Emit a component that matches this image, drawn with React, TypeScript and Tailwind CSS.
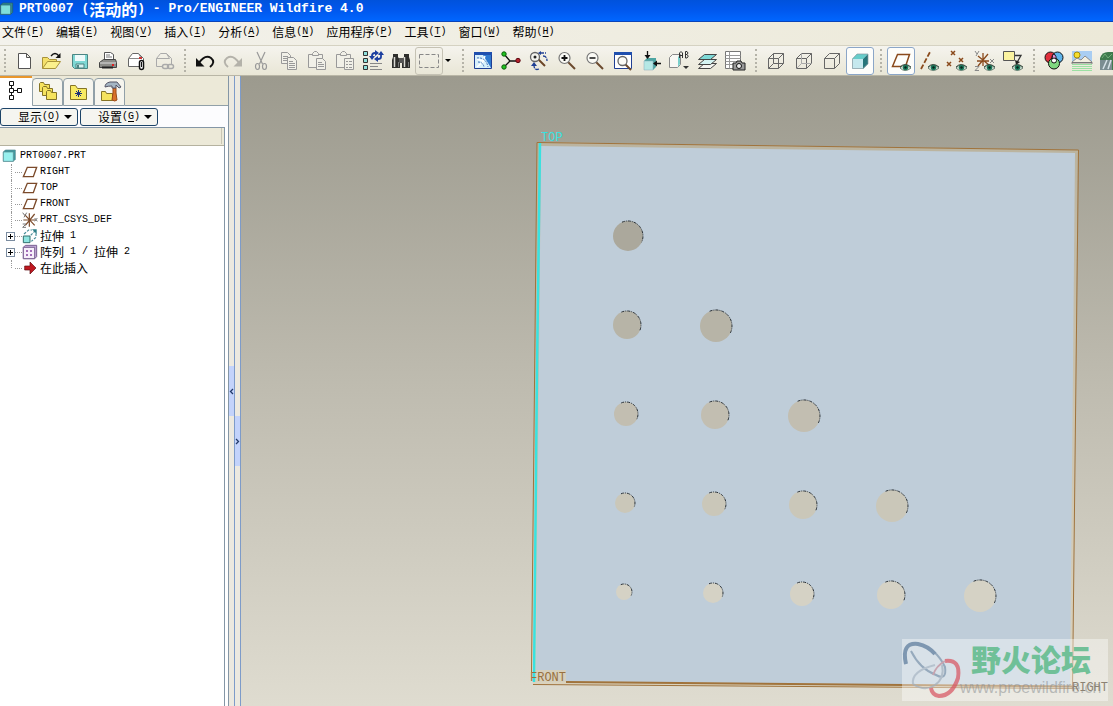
import type { ReactNode } from "react";

const MONO = "font-['Liberation_Mono',monospace]";
const CJK = "font-['Noto_Sans_CJK_SC',sans-serif]";

const menus = [
  { name: "文件", key: "F" },
  { name: "编辑", key: "E" },
  { name: "视图", key: "V" },
  { name: "插入", key: "I" },
  { name: "分析", key: "A" },
  { name: "信息", key: "N" },
  { name: "应用程序", key: "P" },
  { name: "工具", key: "T" },
  { name: "窗口", key: "W" },
  { name: "帮助", key: "H" },
];

const holes = [
  { y: 236, fill: "#aba89c", items: [[628, 15]] },
  { y: 325, fill: "#b7b4a7", items: [[627, 14], [716, 16]] },
  { y: 414, fill: "#c2beb1", items: [[626, 12], [715, 14], [804, 16]] },
  { y: 503, fill: "#cac7b9", items: [[625, 10], [714, 12], [803, 14], [892, 16]] },
  { y: 592, fill: "#d5d2c5", items: [[624, 8], [713, 10], [802, 12], [891, 14], [980, 16]] },
];

type Tool = { label: string; icon: ReactNode; active?: boolean; framed?: boolean };

const Icon = ({ children, size = "size-6" }: { children: ReactNode; size?: string }) => (
  <svg viewBox="0 0 24 24" fill="none" className={`${size} shrink-0`} aria-hidden="true">
    {children}
  </svg>
);

const Eye = () => (
  <g>
    <path d="M11 19q5-6 11 0q-6 5-11 0z" fill="#dfe9df" stroke="#6b7f72" />
    <circle cx="16.5" cy="18.5" r="2.8" fill="#1c7a5c" />
    <circle cx="16.5" cy="18.5" r="1.2" fill="#06241c" />
    <path d="M11 18q5-5 11 0" stroke="#33463c" />
  </g>
);

const Cube = ({ hidden }: { hidden?: ReactNode }) => (
  <g stroke="#666" strokeLinejoin="round">
    <path d="M4.500 9.500h10v10h-10zM4.500 9.500l5-5h10v10l-5 5M14.500 9.500l5-5" />
    {hidden}
  </g>
);

const Lens = ({ children }: { children?: ReactNode }) => (
  <g>
    <path d="M13 13l7 7" stroke="#6b4a2e" strokeWidth="2" />
    <circle cx="9.500" cy="9" r="5.500" fill="#fbfbf6" stroke="#777" strokeWidth="1.200" />
    {children}
  </g>
);

const fileTools: Tool[] = [
  {
    label: "新建",
    icon: (
      <path d="M6.500 4.500h8l4 4v11h-12zM14.500 4.500v4h4" fill="#fff" stroke="#555" />
    ),
  },
  {
    label: "打开",
    icon: (
      <>
        <path d="M2.500 19.500v-11h5l2 2h7v3" fill="#f4e06a" stroke="#a8923a" />
        <path d="M2.500 19.500l5-7h13l-5 7z" fill="#fbf08c" stroke="#a8923a" />
        <path d="M11 7q4-5 8 0" stroke="#111" strokeWidth="1.300" />
        <path d="M20.500 4v5h-5z" fill="#111" />
      </>
    ),
  },
  {
    label: "保存",
    icon: (
      <>
        <path d="M4.500 5.500h15v14h-13l-2-2z" fill="#7ed8d4" stroke="#4c8583" />
        <path d="M7 6h10v6H7z" fill="#eefafa" />
        <path d="M8 15h8v4H8z" fill="#d5f2f0" stroke="#4c8583" />
        <path d="M10 16v3" stroke="#4c8583" strokeWidth="2" />
      </>
    ),
  },
  {
    label: "打印",
    icon: (
      <>
        <path d="M8.500 11V3.500h6l3 2V11" fill="#fff" stroke="#555" />
        <path d="M10 6h4M10 8h6" stroke="#777" />
        <path d="M3.500 13.500l4-3h12l1 3v5h-17z" fill="#8c8c88" stroke="#444" />
        <path d="M4 14h16" stroke="#ddd" />
        <path d="M6 18.500h11" stroke="#222" strokeWidth="2" />
        <path d="M16 16h2" stroke="#d22" strokeWidth="2" />
      </>
    ),
  },
  {
    label: "发送附件",
    icon: (
      <>
        <path d="M4.500 17.500v-8l4-5h6l5 5v8z" fill="#fff" stroke="#666" />
        <path d="M4.500 9.500h13l-3-5" stroke="#888" />
        <path d="M15 9h3" stroke="#c33" strokeWidth="2" />
        <rect x="15.500" y="11.500" width="4" height="9" rx="2" fill="#fff" stroke="#111" strokeWidth="1.500" />
        <path d="M17.500 13v5" stroke="#111" />
      </>
    ),
  },
  {
    label: "发送链接",
    icon: (
      <g stroke="#aaa">
        <path d="M4.500 17.500v-8l4-5h6l5 5v6M4.500 9.500h13l-3-5M4.500 17.500h6" />
        <rect x="10.500" y="15.500" width="6" height="4" rx="2" strokeWidth="1.500" />
        <rect x="15.500" y="15.500" width="6" height="4" rx="2" strokeWidth="1.500" />
      </g>
    ),
  },
];

const editTools: Tool[] = [
  {
    label: "撤消",
    icon: (
      <>
        <path d="M6 14q6-9 12-5q5 4-1 9" stroke="#111" strokeWidth="2" />
        <path d="M3 9v8.500h8.500z" fill="#111" />
      </>
    ),
  },
  {
    label: "重做",
    icon: (
      <>
        <path d="M18 14q-6-9-12-5q-5 4 1 9" stroke="#b4b2aa" strokeWidth="2" />
        <path d="M21 9v8.500h-8.500z" fill="#b4b2aa" />
      </>
    ),
  },
  {
    label: "剪切",
    icon: (
      <g stroke="#999" strokeWidth="1.200">
        <path d="M8 3l5.500 12M16 3l-5.500 12" />
        <ellipse cx="8.500" cy="17.500" rx="2" ry="3" />
        <ellipse cx="15.500" cy="17.500" rx="2" ry="3" />
      </g>
    ),
  },
  {
    label: "复制",
    icon: (
      <g stroke="#999" fill="#f1f0e8">
        <path d="M4.500 3.500h6l3 3v8h-9z" />
        <path d="M6 7.500h5M6 9.500h5M6 11.500h5" />
        <path d="M10.500 8.500h6l3 3v9h-9z" />
        <path d="M12 12.500h4M12 14.500h6M12 16.500h6M12 18.500h6" />
      </g>
    ),
  },
  {
    label: "粘贴",
    icon: (
      <g stroke="#999" fill="#f1f0e8">
        <path d="M3.500 5.500h14v13h-14z" />
        <path d="M7.500 6.500v-2l2-2h2l2 2v2z" />
        <path d="M11.500 9.500h6l3 3v8h-9z" />
        <path d="M13 13.500h4M13 15.500h6M13 17.500h6" />
      </g>
    ),
  },
  {
    label: "选择性粘贴",
    icon: (
      <g stroke="#999" fill="#f1f0e8">
        <path d="M3.500 5.500h14v13h-14z" />
        <path d="M7.500 6.500v-2l2-2h2l2 2v2z" />
        <path d="M11.500 9.500h9v11h-9z" />
        <path d="M13 12.500h2M16 12.500h3M13 15.500h2M16 15.500h3M13 18.500h2M16 18.500h3" />
      </g>
    ),
  },
  {
    label: "再生",
    icon: (
      <>
        <g fill="#8fe0dc" stroke="#333">
          <path d="M2.500 2.500h4v4h-4zM2.500 9.500h4v4h-4zM2.500 16.500h4v4h-4z" />
        </g>
        <g stroke="#1c3fa0" strokeWidth="1.800">
          <path d="M11 9V7q0-3 3-3M20 5v3q0 2-3 2" />
        </g>
        <path d="M14 1v6l4-3zM8 7h6l-3 4zM17 7v6l-4-3zM17 6h6l-3-4z" fill="#1c3fa0" />
        <path d="M9 14.500h12M9 17.500h8M9 20.500h12" stroke="#888" />
      </>
    ),
  },
  {
    label: "查找",
    icon: (
      <>
        <path d="M4 5h5v3l2 3v8H3v-8l1-3zM15 5h5v3l1 3v8h-8v-8l2-3z" fill="#2e2e2c" />
        <path d="M10 9h4v5h-4z" fill="#555" />
        <path d="M5.500 8v10M15.500 8v10" stroke="#d9d9d4" strokeWidth="1.500" />
        <path d="M9.500 13v5M19.500 13v5" stroke="#777" />
      </>
    ),
  },
  {
    label: "选取框",
    framed: true,
    icon: <path d="M2.500 5.500h19v13h-19z" stroke="#888" strokeDasharray="4 2" />,
  },
];

const viewTools: Tool[] = [
  {
    label: "重画",
    icon: (
      <>
        <path d="M3.500 3.500h17v16h-17z" fill="#d8f0fb" stroke="#1f3f94" />
        <path d="M3 3h18v3H3z" fill="#1f4fae" />
        <path d="M12 6h8v13l-3-5z" fill="#2f79cf" />
        <path d="M6 18l7-6M6 10l6 2M14 7l-2 5" stroke="#fff" strokeWidth="1.500" />
        <path d="M6 9q9-1 11 9M7 13q5 0 6 5" stroke="#3d6fb8" strokeDasharray="2 1" />
      </>
    ),
  },
  {
    label: "旋转中心",
    icon: (
      <>
        <path d="M5 5l6 7h9M11 12l-6 6" stroke="#111" strokeWidth="1.300" />
        <circle cx="5" cy="5" r="2.200" fill="#22c322" stroke="#0b5f0b" />
        <circle cx="5" cy="18" r="2.200" fill="#22c322" stroke="#0b5f0b" />
        <circle cx="19" cy="11.500" r="2.200" fill="#b3202c" stroke="#5c0a12" />
      </>
    ),
  },
  {
    label: "定向模式",
    icon: (
      <>
        <path d="M11 10l7 7" stroke="#6b4526" strokeWidth="2" />
        <circle cx="8" cy="8" r="4.500" fill="#f4f4ee" stroke="#666" strokeWidth="1.300" />
        <circle cx="8" cy="8" r="1.500" fill="#222" />
        <path d="M13 4h6M16 7q4 0 4 5M12 20q-5 2-5-4" stroke="#1f3f94" strokeWidth="1.300" strokeDasharray="4 1" />
        <path d="M4 17l3-4 3 4zM14 2v4l-3-2z" fill="#1f3f94" />
      </>
    ),
  },
  {
    label: "放大",
    icon: (
      <Lens>
        <path d="M6.500 9h6M9.500 6v6" stroke="#111" strokeWidth="1.800" />
      </Lens>
    ),
  },
  {
    label: "缩小",
    icon: (
      <Lens>
        <path d="M6.500 9h6" stroke="#111" strokeWidth="1.500" />
      </Lens>
    ),
  },
  {
    label: "重新调整",
    icon: (
      <>
        <path d="M3.500 3.500h17v16h-17z" fill="#fff" stroke="#1f3f94" />
        <path d="M3 3h18v3H3z" fill="#1f4fae" />
        <path d="M14 15l6 6" stroke="#6b4a2e" strokeWidth="2" />
        <circle cx="11.500" cy="12" r="4.500" fill="#fbfbf6" stroke="#666" strokeWidth="1.300" />
      </>
    ),
  },
  {
    label: "重定向",
    icon: (
      <>
        <path d="M5 12l3-3h9v9l-3 3H5z" fill="#4da5a2" />
        <path d="M5 12h9v9H5z" fill="#b5e8e5" stroke="#8ab" strokeWidth="0.500" />
        <path d="M8.500 2v7M22 14.500h-6" stroke="#111" strokeWidth="1.300" />
        <path d="M5.500 6h6l-3 4zM18 11.500v6l-4-3z" fill="#111" />
      </>
    ),
  },
  {
    label: "已保存视图",
    icon: (
      <>
        <path d="M2.500 8.500l3-3h8v10l-3 3h-8z" fill="#f8f8f4" stroke="#888" />
        <path d="M11 8l2-2v9l-2 3z" fill="#79cfcb" />
        <path d="M12.500 9V4l1.500-1.500L15.500 4v5M12.500 6.500h3M18.500 9V2.500h1.500q2 1.500 0 3h-1.500h1.500q2.500 1.500 0 3.500h-1.500" stroke="#333" />
        <path d="M16 17h6l-3 3z" fill="#333" />
      </>
    ),
  },
  {
    label: "层",
    icon: (
      <g stroke="#444" strokeLinejoin="round">
        <path d="M3.500 19.500l6-5h12l-6 5z" fill="#f4f4f0" />
        <path d="M3.500 15.500l6-5h12l-6 5z" fill="#d5f3f2" />
        <path d="M3.500 10.500l6-5h12l-6 5z" fill="#7ed9d6" />
      </g>
    ),
  },
  {
    label: "视图管理器",
    icon: (
      <>
        <path d="M2.500 2.500h15v17h-15z" fill="#fff" stroke="#777" />
        <path d="M2.500 6.500h15M2.500 9.500h15M2.500 12.500h15M2.500 15.500h15M6.500 2.500v17" stroke="#999" />
        <path d="M10 14h3l1-2h4l1 2h3v7H10z" fill="#999" stroke="#222" />
        <circle cx="16" cy="17" r="2.500" fill="#eee" stroke="#111" />
      </>
    ),
  },
];

const displayTools: Tool[] = [
  { label: "线框", icon: <Cube hidden={<path d="M9.500 4.500v10h10M9.500 14.500l-5 5" />} /> },
  { label: "隐藏线", icon: <Cube hidden={<path d="M9.500 4.500v10h10M9.500 14.500l-5 5" stroke="#aaa" />} /> },
  { label: "无隐藏线", icon: <Cube /> },
  {
    label: "着色",
    active: true,
    icon: (
      <>
        <path d="M4 10l5-5h11l-5 5z" fill="#67cdca" />
        <path d="M15 10l5-5v10l-5 5z" fill="#27757a" />
        <path d="M4 10h11v10H4z" fill="#c5e8ee" />
        <path d="M4.500 10v9.500H15l5-5V5H9z" stroke="#8899a0" strokeWidth="0.700" />
      </>
    ),
  },
];

const datumTools: Tool[] = [
  {
    label: "基准平面",
    active: true,
    icon: (
      <>
        <path d="M3.500 17.500l5-12h12l-4 12z" stroke="#8a4a1c" strokeWidth="1.500" />
        <Eye />
      </>
    ),
  },
  {
    label: "基准轴",
    icon: (
      <>
        <path d="M4 20L13 3" stroke="#8a4a1c" strokeWidth="1.800" strokeDasharray="5 2" />
        <Eye />
      </>
    ),
  },
  {
    label: "基准点",
    icon: (
      <>
        <path d="M6 2l4 4M10 2l-4 4M14 9l4 4M18 9l-4 4M2 13l4 4M6 13l-4 4" stroke="#8a4a1c" strokeWidth="1.500" />
        <Eye />
      </>
    ),
  },
  {
    label: "坐标系",
    icon: (
      <>
        <path d="M10 4v13M4 12h12M5 7l11 9M15 5L5 17" stroke="#8a4a1c" strokeWidth="1.300" />
        <path d="M2 2l2 3M6 2L3 7M17 10l4 4M21 10l-4 4M2 17.500h4l-4 4h4" stroke="#888" />
        <Eye />
      </>
    ),
  },
  {
    label: "注释",
    icon: (
      <>
        <path d="M2.500 2.500h11v9h-11z" fill="#fbf3a0" stroke="#555" />
        <path d="M14 6.500h6l-4 7" stroke="#333" strokeWidth="1.300" />
        <path d="M14 11l1 5 4-3z" fill="#222" />
        <Eye />
      </>
    ),
  },
];

const renderTools: Tool[] = [
  {
    label: "外观",
    icon: (
      <g stroke="#111">
        <circle cx="8.500" cy="8.500" r="5.500" fill="#e02f3c" />
        <circle cx="15.500" cy="8.500" r="5.500" fill="#5fb4ea" />
        <circle cx="12" cy="14.500" r="5.500" fill="#7fd880" />
        <path d="M12 4.500q3 3 2 6.500l-4-1q0-4 2-5.500z" fill="#e39ae0" />
        <circle cx="12" cy="11.500" r="2.500" fill="#fff" />
      </g>
    ),
  },
  {
    label: "场景",
    icon: (
      <>
        <path d="M2 2h20v11H2z" fill="#a9cdf2" />
        <path d="M2 13l5-4 4 2 4-4 7 6v2H2z" fill="#f2eee0" stroke="#777" strokeWidth="0.800" />
        <circle cx="7" cy="6" r="3" fill="#f6df2c" stroke="#a48a10" />
        <path d="M2 13.500h20" stroke="#777" />
        <path d="M2 15.500h20M2 17.500h20M2 19.500h20M2 21.500h20" stroke="#9be0a2" />
      </>
    ),
  },
  {
    label: "渲染",
    icon: (
      <>
        <path d="M2 9q2-6 8-6h12v18H2z" fill="#3f7a4d" />
        <path d="M4 9l3-4 3 4 4-4" stroke="#6fae78" />
        <path d="M2 21V11h12v10z" fill="#7b8d92" />
        <path d="M5 20l4-9M10 20l3-9" stroke="#d7e2e8" strokeWidth="1.500" />
      </>
    ),
  },
];

const Separator = ({ first }: { first?: boolean }) => (
  <div className={`flex h-full shrink-0 items-center justify-center ${first ? "w-[10px]" : "w-[13px]"}`}>
    <div className="h-[23px] border-l-2 border-dotted border-[#b5b3a8]" />
  </div>
);

const ToolGroup = ({ tools }: { tools: Tool[] }) => (
  <div className="flex shrink-0">
    {tools.map((tool) => (
      <button
        key={tool.label}
        aria-label={tool.label}
        className={`flex size-7 items-center justify-center rounded-[3px] border ${
          tool.active
            ? "border-[#8ba6c8] bg-[#fdfdfb]"
            : tool.framed
              ? "border-[#c5c2b4]"
              : "border-transparent"
        }`}
      >
        <Icon>{tool.icon}</Icon>
      </button>
    ))}
  </div>
);

// Latin runs are set narrower than the Chinese ones, half an em per character
const Mixed = ({ text }: { text: string }) => (
  <span className="inline-flex items-center whitespace-pre">
    {text.split(/([\u4e00-\u9fff]+)/).map((part, index) =>
      /[\u4e00-\u9fff]/.test(part) ? (
        <span key={index} className={`${CJK} text-xs leading-4`}>
          {part}
        </span>
      ) : (
        <span key={index} className={`${MONO} text-[10px] leading-4`}>
          {part}
        </span>
      )
    )}
  </span>
);

const AccessKey = ({ name, letter }: { name: string; letter: string }) => (
  <span className="inline-flex items-center whitespace-nowrap">
    <Mixed text={name} />
    <span className={`${MONO} text-[10px] leading-4`}>
      (<span className="underline underline-offset-2">{letter}</span>)
    </span>
  </span>
);

const PlaneIcon = () => (
  <Icon size="size-4">
    <path d="M2 19L8 5h14l-5 14z" stroke="#7b4a2a" strokeWidth="2" />
  </Icon>
);

const tree = [
  { text: "RIGHT", icon: <PlaneIcon /> },
  { text: "TOP", icon: <PlaneIcon /> },
  { text: "FRONT", icon: <PlaneIcon /> },
  {
    text: "PRT_CSYS_DEF",
    icon: (
      <Icon size="size-4">
        <path d="M11 2v20M2 12h18M4 4l15 16M19 3L5 20" stroke="#7b4a2a" strokeWidth="1.800" />
        <path d="M1 1l3 4M7 1L3 8M19 9l4 5M23 9l-4 5M1 18h5l-5 5h5" stroke="#777" strokeWidth="1.500" />
      </Icon>
    ),
  },
  {
    text: "拉伸 1",
    expandable: true,
    icon: (
      <Icon size="size-4">
        <path d="M2 12h10v10H2z" fill="#8fe5e0" stroke="#31706e" strokeWidth="1.500" />
        <path d="M3 9l7-6h5M21 8v6l-7 6M13 11l7-7" stroke="#4a8f9a" strokeWidth="1.800" strokeDasharray="4 2" />
        <path d="M15 2h7v7z" fill="#2c7f88" />
      </Icon>
    ),
  },
  {
    text: "阵列 1 / 拉伸 2",
    expandable: true,
    icon: (
      <Icon size="size-4">
        <path d="M2 5l3-3h17v17l-3 3H2z" fill="#c3aad8" stroke="#7a6192" strokeWidth="1.500" />
        <path d="M2 5h17v17H2z" fill="#f6effa" stroke="#7a6192" strokeWidth="1.500" />
        <path d="M6 9h3v3H6zM12 9h3v3h-3zM6 15h3v3H6zM12 15h3v3h-3z" fill="#a26db8" />
      </Icon>
    ),
  },
  {
    text: "在此插入",
    icon: (
      <Icon size="size-4">
        <path d="M4 9h8V3l9 9-9 9v-6H4z" fill="#c01820" stroke="#5c0a10" />
      </Icon>
    ),
  },
];

const Folder = ({ x, y }: { x: number; y: number }) => (
  <path
    transform={`translate(${x} ${y})`}
    d="M.5 9.500v-8l1-1h3l1 2h5v7z"
    fill="#f6e35e"
    stroke="#857426"
  />
);

const tabs = [
  {
    label: "模型树",
    icon: (
      <path d="M5.500 1.500h4v4h-4zM5.500 8.500h4v4h-4zM5.500 15.500h4v4h-4zM13.500 8.500h4v4h-4zM7.500 5.500v3M7.500 12.500v3M9.500 10.500h4" stroke="#111" />
    ),
  },
  {
    label: "文件夹浏览器",
    icon: (
      <>
        <Folder x={3} y={2} />
        <Folder x={6} y={6} />
        <Folder x={10} y={10} />
      </>
    ),
  },
  {
    label: "收藏夹",
    icon: (
      <>
        <path d="M3.500 19.500v-14h5l2 3h9v11z" fill="#f8ea62" stroke="#857426" />
        <path d="M11.500 10v7M8 13.500h7M9 11l5 5M14 11l-5 5" stroke="#1a2f7a" />
      </>
    ),
  },
  {
    label: "连接",
    icon: (
      <>
        <path d="M3.500 20.500v-9h4l1 2h6v7z" fill="#f6e35e" stroke="#857426" />
        <path d="M15 8h3v5l1 7q-2 2-5 0l1-7z" fill="#d9722a" stroke="#9a4a18" />
        <path d="M7 7q0-4 5-5h7l4 5-2 1-3-3v3h-4V6q-4 0-7 1z" fill="#a5b6c4" stroke="#556" />
      </>
    ),
  },
];

const ModelTree = () => (
  <aside className="flex w-[229px] shrink-0 flex-col border-r border-[#8496a6] bg-white">
    <div className="flex h-[30px] items-end bg-[#ece9d8]" role="tablist">
      {tabs.map((tab, index) => (
        <button
          key={tab.label}
          role="tab"
          aria-selected={index === 0}
          aria-label={tab.label}
          className={
            index === 0
              ? "flex h-[30px] w-8 items-center justify-center border-t-2 border-[#e8962c] bg-white"
              : "flex h-7 w-[31px] items-center justify-center rounded-t border border-[#91a0a8] bg-[#f6f5ee]"
          }
        >
          <Icon>{tab.icon}</Icon>
        </button>
      ))}
      <div className="h-px flex-1 bg-[#91a0a8]" />
    </div>
    <div className="flex gap-0.5 bg-[#fcfcfe] pt-0.5 pb-px">
      {[
        { name: "显示", key: "O" },
        { name: "设置", key: "G" },
      ].map((item) => (
        <button
          key={item.key}
          className="flex h-[18px] w-[78px] items-center justify-center gap-1 rounded-[3px] border border-[#1c4468] bg-[#f5f5f0] pl-3"
        >
          <AccessKey name={item.name} letter={item.key} />
          <span className="border-x-4 border-t-4 border-x-transparent border-t-black" />
        </button>
      ))}
    </div>
    <div className="mr-[3px] flex flex-1 flex-col border-t border-r border-[#8496a6]">
      <div className="h-[18px] border-b border-[#b5b29f] bg-[#ece9d8] pr-0.5">
        <div className="h-4 border-r border-[#c9c6b5]" />
      </div>
      <div className="pt-0.5">
        <div className="flex h-4 items-center gap-0.5 pl-0.5">
          <Icon size="size-4">
            <path d="M2 6l3-3h15v14l-3 3H2z" fill="#3c9aa0" stroke="#5b8a90" />
            <path d="M2 6h15v14H2z" fill="#98f0ee" stroke="#5b8a90" />
          </Icon>
          <Mixed text="PRT0007.PRT" />
        </div>
        <ul>
          {tree.map((node, index) => (
            <li key={node.text} className="flex h-4 items-center pl-1.5">
              <span className="flex h-4 w-[9px] items-center justify-center">
                {node.expandable ? (
                  <button
                    aria-label={`展开 ${node.text}`}
                    className="flex size-[9px] items-center justify-center border border-[#7b8ca0] bg-white"
                  >
                    <svg viewBox="0 0 5 5" className="size-[5px]" aria-hidden="true">
                      <path d="M0 2h5v1H0zM2 0h1v5H2z" />
                    </svg>
                  </button>
                ) : (
                  <span
                    className={`ml-1 w-1 border-l border-dotted border-[#999] ${
                      index === tree.length - 1 ? "mb-2 h-2" : "h-4"
                    }`}
                  />
                )}
              </span>
              <span className="w-[7px] border-t border-dotted border-[#999]" />
              {node.icon}
              <span className="flex pl-0.5">
                <Mixed text={node.text} />
              </span>
            </li>
          ))}
        </ul>
      </div>
    </div>
  </aside>
);

const Sash = ({ direction }: { direction: "left" | "right" }) => (
  <div className="flex w-1.5 shrink-0 flex-col justify-center border-r border-[#7d9bc9] bg-[#ece9e0]">
    <button
      aria-label={direction === "left" ? "折叠" : "展开"}
      className={`flex h-[50px] items-center justify-center bg-[#c3d3fb] ${direction === "right" ? "mt-[100px]" : ""}`}
    >
      <svg viewBox="0 0 5 7" fill="none" className="h-[7px] w-[5px]" aria-hidden="true">
        <path d={direction === "left" ? "M4 1L1.500 3.500L4 6" : "M1 1l2.500 2.500L1 6"} stroke="#223a6b" strokeWidth="1.300" />
      </svg>
    </button>
  </div>
);

const Viewport = () => (
  <main className="min-w-0 flex-1 overflow-hidden bg-linear-to-b from-[#9c9a8e] via-[#bfbcb0] to-[#dfdcd0]">
    <svg viewBox="241 76 872 630" className="size-full" aria-label="PRT0007">
      <path d="M537 142L1078 150L1072 689L533 684z" fill="#d6c9ab" fillOpacity="0.450" />
      <path d="M541 146L1075 153L1070 686L536 681z" fill="#bfcdd9" />
      <g fill="none" stroke="#a0733c">
        <path d="M537 142.500L1078.500 150L1072.500 689" />
        <path d="M537 142.500L531.500 672M533 684.500L1072 688.500" />
        <path d="M566 682L1072 686.500" strokeWidth="2" />
      </g>
      <path d="M540 143L537 370L534 682" fill="none" stroke="#38e2e0" strokeWidth="2.500" />
      {holes.map((row) =>
        row.items.map(([x, r], index) => (
          <g key={x}>
            <circle cx={x} cy={row.y + index} r={r} fill={row.fill} />
            <path
              d={`M${x - r * 0.4} ${row.y + index - r * 0.92}A${r} ${r} 0 0 1 ${x + r * 0.9} ${row.y + index + r * 0.43}`}
              fill="none"
              stroke="#2b3238"
              strokeDasharray="3 1 1 1"
            />
          </g>
        ))
      )}
      <g className={`${MONO} text-xs`}>
        <text x="541" y="141" fill="#38e2e0">
          TOP
        </text>
        <path d="M536 670h30v12h-30z" fill="#d6d0bd" />
        <text x="530" y="681" fill="#99703e">
          FRONT
        </text>
      </g>
      <g>
        <path d="M902 639h206v62H902z" fill="#fff" fillOpacity="0.400" />
        <g fill="none" opacity="0.700">
          <path d="M906 664q-5-22 12-20q18 4 27 23q2 14-9 8q-16-6-25-24" stroke="#7b93ab" strokeWidth="2" />
          <path d="M906 664q-5-22 12-20q10 2 17 10" stroke="#58799a" strokeWidth="4" />
          <path d="M913 684q-2-13 22-19" stroke="#a8b6c4" strokeWidth="2" />
          <path d="M913 684q12 8 22 1q10-7 7-20" stroke="#a3b0bd" strokeWidth="2" />
          <path d="M945 661q16-2 13 17q-6 18-19 18q-7-1-8-8" stroke="#d8525f" strokeWidth="4" />
          <path d="M945 661q-9 5-12 14" stroke="#c08a98" strokeWidth="2" />
        </g>
        <text x="971" y="671" fill="#5dba8a" fillOpacity="0.850" className={`${CJK} text-3xl font-black`}>
          野火论坛
        </text>
        <text x="960" y="693" fill="#8a8f92" fillOpacity="0.550" className="font-['Liberation_Sans',sans-serif] text-base">
          www.proewildfire.cn
        </text>
      </g>
      <text x="1072" y="691" fill="#8c8273" className={`${MONO} text-xs`}>
        RIGHT
      </text>
    </svg>
  </main>
);

const App = () => {
  return (
    <div className="flex h-screen w-full flex-col overflow-hidden bg-[#ece9d8] text-black">
      <header className="flex h-[22px] shrink-0 items-center gap-[3px] border-b border-[#0a43b8] bg-linear-to-b from-[#0052dc] via-[#0058ee] to-[#0066ff] pr-2 pb-1">
        <Icon size="size-4">
          <path d="M1 6l3-3h15v14l-3 3H1z" fill="#2d8e92" stroke="#27566a" />
          <path d="M1 6h15v14H1z" fill="#7fdedb" stroke="#27566a" />
        </Icon>
        <h1 className={`${MONO} flex items-center text-[13px] leading-4 font-bold whitespace-pre text-white`}>
          <span>PRT0007 (</span>
          <span className={`${CJK} text-base leading-4`}>活动的</span>
          <span>) - Pro/ENGINEER Wildfire 4.0</span>
        </h1>
      </header>
      <nav className="flex h-6 shrink-0 items-center gap-3 border-b border-[#d5d2c2] bg-linear-to-r from-[#f3f2ec] to-[#ece9d8] pb-1 pl-0.5">
        {menus.map((menu) => (
          <button key={menu.key} className="flex items-center">
            <AccessKey name={menu.name} letter={menu.key} />
          </button>
        ))}
      </nav>
      <div className="flex h-[30px] shrink-0 items-center overflow-hidden border-b border-[#b9b6a6] bg-linear-to-b from-[#f5f4ee] to-[#e9e6d6]">
        <Separator first />
        <ToolGroup tools={fileTools} />
        <Separator />
        <ToolGroup tools={editTools} />
        <button aria-label="选取选项" className="flex h-7 w-[13px] shrink-0 items-center pl-0.5">
          <span className="border-x-3 border-t-3 border-x-transparent border-t-black" />
        </button>
        <Separator />
        <ToolGroup tools={viewTools} />
        <Separator />
        <ToolGroup tools={displayTools} />
        <Separator />
        <ToolGroup tools={datumTools} />
        <Separator />
        <ToolGroup tools={renderTools} />
      </div>
      <div className="flex min-h-0 flex-1">
        <ModelTree />
        <Sash direction="left" />
        <Sash direction="right" />
        <Viewport />
      </div>
    </div>
  );
};

export default App;
